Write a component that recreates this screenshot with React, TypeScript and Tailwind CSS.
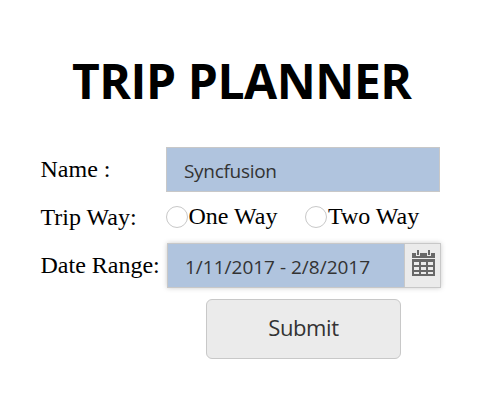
function CalendarIcon() {
  return (
    <svg width="23" height="26" viewBox="0 0 23 26" fill="#686868" aria-hidden="true">
      <path d="M0 3h4v3h4V3h7v3h4V3h4v5H0z" />
      <path d="M5 0h2v5H5zM16 0h2v5h-2z" />
      <path fillRule="evenodd" d="M0 9h23v17H0zM2 12v3h5v-3zM9 12v3h5v-3zM16 12v3h5v-3zM2 17v3h5v-3zM9 17v3h5v-3zM16 17v3h5v-3zM2 22v2h5v-2zM9 22v2h5v-2zM16 22v2h5v-2z" />
    </svg>
  );
}

function TripOption({ label }: { label: string }) {
  return (
    <label className="flex items-center whitespace-nowrap">
      <input type="radio" name="trip" className="size-[22px] shrink-0 appearance-none rounded-full border border-[#c8c8c8] bg-white" />
      <span className="pb-[2px] pl-[0.5px]">{label}</span>
    </label>
  );
}

export default function App() {
  return (
    <main className="h-[415px] w-[501px] overflow-hidden bg-white pl-[40px] pt-[53px] font-['Liberation_Serif',serif] text-2xl leading-[28px] text-black">
      <h1 className="ml-[32px] h-[94px] whitespace-nowrap font-['Open_Sans',sans-serif] text-[48px] font-bold leading-[55px] tracking-[-0.45px]">TRIP PLANNER</h1>
      <div className="flex h-[45px] items-center">
        <span className="w-[126px] shrink-0 pb-[2px] pl-[0.5px]">Name :</span>
        <div className="flex h-[45px] w-[274px] items-center border border-[#c8c8c8] bg-[#b0c4de] pl-[17px] pt-[2px] font-['Open_Sans',sans-serif] text-[19px] tracking-[-0.3px] text-[#333]">Syncfusion</div>
      </div>
      <div className="flex h-[50px] items-center">
        <span className="w-[126px] shrink-0 pl-[0.5px]">Trip Way:</span>
        <div className="flex gap-[28px]">
          <TripOption label="One Way" />
          <TripOption label="Two Way" />
        </div>
      </div>
      <div className="flex h-[47px] items-center">
        <span className="w-[127px] shrink-0 whitespace-nowrap pb-[1px] pl-[0.5px]">Date Range:</span>
        <div className="flex h-[45px] w-[274px] border border-[#c8c8c8] bg-[#b0c4de] shadow-[0_0_5px_#ccc]">
          <div className="flex flex-1 items-center whitespace-nowrap pl-[17px] pt-[2px] font-['Open_Sans',sans-serif] text-[19px] text-[#333]">1/11/2017 - 2/8/2017</div>
          <button className="flex w-[36px] items-start justify-start border-l border-[#c8c8c8] bg-[#ebebeb] pl-[7px] pt-[6px]" aria-label="Choose dates">
            <CalendarIcon />
          </button>
        </div>
      </div>
      <button className="ml-[166px] mt-[10px] flex h-[60px] w-[195px] items-center justify-center rounded-[6px] border border-[#c8c8c8] bg-[#ebebeb] pb-[4px] font-['Open_Sans',sans-serif] text-[22px] tracking-[-0.4px] text-[#333]">Submit</button>
    </main>
  );
}
